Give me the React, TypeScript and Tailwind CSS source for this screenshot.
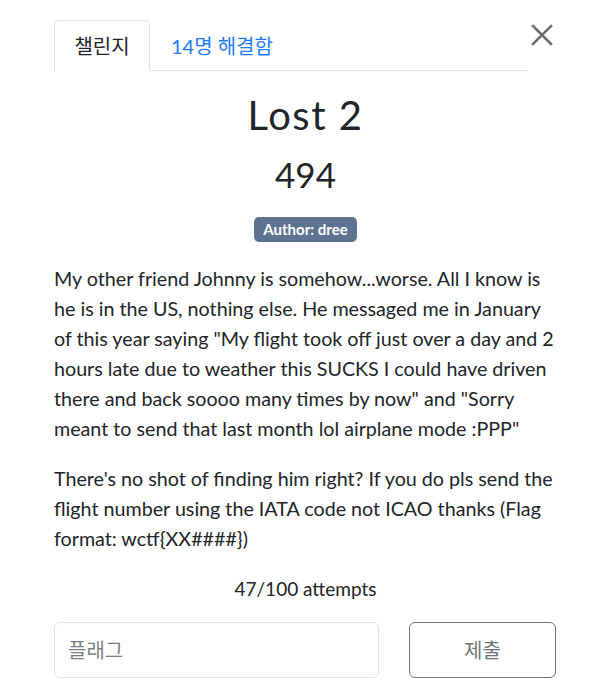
import { useState } from "react";

const FONT = "font-['Lato','Noto_Sans_CJK_KR',sans-serif]";

export default function App() {
  const [flag, setFlag] = useState<string>("");
  const [tab, setTab] = useState<"challenge" | "solves">("challenge");

  return (
    <div className={`${FONT} min-h-[699px] w-[611px] bg-white text-[#212529]`}>
      <div className="relative pl-[54px] pr-[54px] pt-[20px]">
        {/* Close button */}
        <button
          aria-label="Close"
          className="absolute left-[530px] top-[23px] flex h-[24px] w-[24px] items-center justify-center text-[#6f6f6f]"
        >
          <svg width="22" height="22" viewBox="0 0 22 22" fill="none">
            <path
              d="M2 2 L20 20 M20 2 L2 20"
              stroke="currentColor"
              strokeWidth="2.6"
              strokeLinecap="square"
            />
          </svg>
        </button>

        {/* Tabs */}
        <nav className="flex w-[473px] border-b border-[#dee2e6]">
          <button
            className={`-mb-px h-[51px] w-[96px] rounded-t-[5px] border text-[20px] leading-[30px] ${
              tab === "challenge"
                ? "border-[#dee2e6] border-b-white bg-white text-[#212529]"
                : "border-transparent text-[#1e7bff]"
            }`}
            onClick={() => setTab("challenge")}
          >
            챌린지
          </button>
          <button
            className={`-mb-px h-[51px] rounded-t-[5px] border px-[20px] text-[20px] leading-[30px] ${
              tab === "solves"
                ? "border-[#dee2e6] border-b-white bg-white text-[#212529]"
                : "border-transparent text-[#1e7bff]"
            }`}
            onClick={() => setTab("solves")}
          >
            14명 해결함
          </button>
        </nav>

        {/* Challenge body */}
        <div className="w-[503px]">
          <h2 className="pt-[20px] text-center text-[40px] font-normal leading-[48px] tracking-[1.5px]">
            Lost 2
          </h2>
          <h3 className="mt-[14px] text-center text-[35px] font-normal leading-[42px]">
            494
          </h3>
          <div className="mt-[22px] flex justify-center">
            <span className="rounded-[5px] bg-[#5d7391] px-[9px] py-[4px] text-[15px] font-bold leading-[17px] text-white">
              Author: dree
            </span>
          </div>

          <div className="mt-[22px] text-[19.7px] leading-[30px]">
            <p className="mb-[20px]">
              My other friend Johnny is somehow...worse. All I know is he is in
              the US, nothing else. He messaged me in January of this year
              saying "My flight took off just over a day and 2 hours late due
              to weather this SUCKS I could have driven there and back soooo
              many times by now" and "Sorry meant to send that last month lol
              airplane mode :PPP"
            </p>
            <p>
              There's no shot of finding him right? If you do pls send the
              flight number using the IATA code not ICAO thanks (Flag format:
              wctf{"{"}XX####{"}"})
            </p>
          </div>

          <p className="mt-[20px] text-center text-[19px] leading-[30px]">
            47/100 attempts
          </p>

          <form
            className="mt-[18px] flex items-start"
            onSubmit={(e) => e.preventDefault()}
          >
            <input
              className="h-[56px] w-[325px] rounded-[6px] border border-[#dee2e6] px-[13px] text-[20px] text-[#495057] outline-none placeholder:text-[#7b7f84]"
              placeholder="플래그"
              value={flag}
              onChange={(e) => setFlag(e.target.value)}
            />
            <button
              type="submit"
              className="ml-[30px] h-[56px] w-[147px] rounded-[6px] border border-[#6c757d] text-[20px] text-[#6c757d]"
            >
              제출
            </button>
          </form>
        </div>
      </div>
    </div>
  );
}
